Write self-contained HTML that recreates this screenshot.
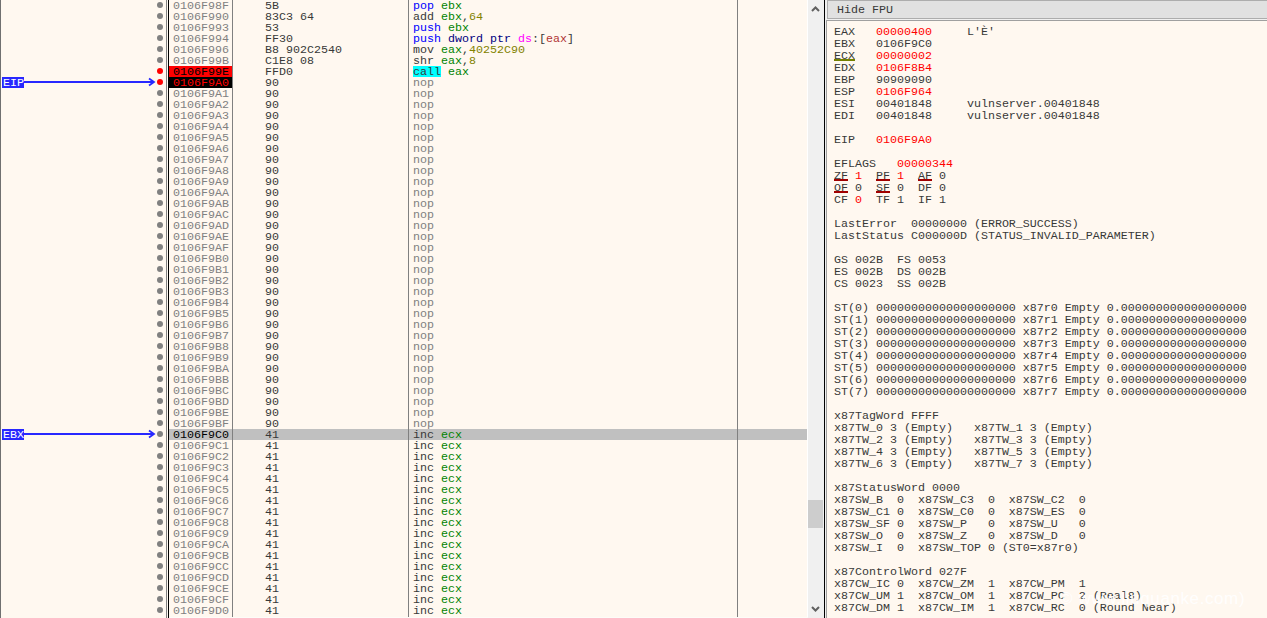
<!DOCTYPE html>
<html><head><meta charset="utf-8"><style>
html,body{margin:0;padding:0}
body{width:1267px;height:618px;overflow:hidden;position:relative;background:#FFF8F0;font-family:"Liberation Mono",monospace;font-size:11.67px;color:#383838}
.a{position:absolute}
.t{position:absolute;white-space:pre;line-height:11px;height:11px}
.ad{color:#808080}
.pp{color:#0000FF}
.rg{color:#008300}
.vl{color:#828200}
.ms{color:#000080}
.sg{color:#FF00FF}
.mr{color:#B03434}
.cl{}
.np{color:#808080}
.dot{position:absolute;width:6px;height:6px;border-radius:50%;background:#808080;left:156.5px}
.rd{background:#FF0000}
.rt{position:absolute;white-space:pre;line-height:12px;height:12px;left:834px}
.red{color:#FF0000}
</style></head><body>

<div class="a" style="left:0;top:0;width:1px;height:618px;background:#707070"></div>
<div class="a" style="left:166px;top:0;width:1px;height:618px;background:#808080"></div>
<div class="a" style="left:168px;top:0;width:1px;height:618px;background:#000"></div>
<div class="a" style="left:169px;top:429px;width:638px;height:11px;background:#C0C0C0"></div>
<div class="a" style="left:169px;top:66px;width:63px;height:11px;background:#FF0000"></div>
<div class="a" style="left:169px;top:77px;width:63px;height:11px;background:#000000"></div>
<div class="a" style="left:413px;top:66px;width:28px;height:11px;background:#00FFFF"></div>
<div class="a" style="left:232px;top:0;width:1px;height:617px;background:#808080"></div>
<div class="a" style="left:408px;top:0;width:1px;height:617px;background:#808080"></div>
<div class="a" style="left:737px;top:0;width:1px;height:617px;background:#808080"></div>
<div class="dot" style="top:2.3px"></div>
<div class="t" style="left:173px;top:1px;color:#808080">0106F98F</div>
<div class="t" style="left:265px;top:1px">5B</div>
<div class="t" style="left:413px;top:1px"><span class="pp">pop</span> <span class="rg">ebx</span></div>
<div class="dot" style="top:13.3px"></div>
<div class="t" style="left:173px;top:12px;color:#808080">0106F990</div>
<div class="t" style="left:265px;top:12px">83C3 64</div>
<div class="t" style="left:413px;top:12px">add <span class="rg">ebx</span>,<span class="vl">64</span></div>
<div class="dot" style="top:24.3px"></div>
<div class="t" style="left:173px;top:23px;color:#808080">0106F993</div>
<div class="t" style="left:265px;top:23px">53</div>
<div class="t" style="left:413px;top:23px"><span class="pp">push</span> <span class="rg">ebx</span></div>
<div class="dot" style="top:35.3px"></div>
<div class="t" style="left:173px;top:34px;color:#808080">0106F994</div>
<div class="t" style="left:265px;top:34px">FF30</div>
<div class="t" style="left:413px;top:34px"><span class="pp">push</span> <span class="ms">dword ptr</span> <span class="sg">ds</span>:[<span class="mr">eax</span>]</div>
<div class="dot" style="top:46.3px"></div>
<div class="t" style="left:173px;top:45px;color:#808080">0106F996</div>
<div class="t" style="left:265px;top:45px">B8 902C2540</div>
<div class="t" style="left:413px;top:45px">mov <span class="rg">eax</span>,<span class="vl">40252C90</span></div>
<div class="dot" style="top:57.3px"></div>
<div class="t" style="left:173px;top:56px;color:#808080">0106F99B</div>
<div class="t" style="left:265px;top:56px">C1E8 08</div>
<div class="t" style="left:413px;top:56px">shr <span class="rg">eax</span>,<span class="vl">8</span></div>
<div class="dot rd" style="top:68.3px"></div>
<div class="t" style="left:173px;top:67px;color:#000">0106F99E</div>
<div class="t" style="left:265px;top:67px">FFD0</div>
<div class="t" style="left:413px;top:67px"><span class="cl">call</span> <span class="rg">eax</span></div>
<div class="dot rd" style="top:79.3px"></div>
<div class="t" style="left:173px;top:78px;color:#FF0000">0106F9A0</div>
<div class="t" style="left:265px;top:78px">90</div>
<div class="t" style="left:413px;top:78px"><span class="np">nop</span></div>
<div class="dot" style="top:90.3px"></div>
<div class="t" style="left:173px;top:89px;color:#808080">0106F9A1</div>
<div class="t" style="left:265px;top:89px">90</div>
<div class="t" style="left:413px;top:89px"><span class="np">nop</span></div>
<div class="dot" style="top:101.3px"></div>
<div class="t" style="left:173px;top:100px;color:#808080">0106F9A2</div>
<div class="t" style="left:265px;top:100px">90</div>
<div class="t" style="left:413px;top:100px"><span class="np">nop</span></div>
<div class="dot" style="top:112.3px"></div>
<div class="t" style="left:173px;top:111px;color:#808080">0106F9A3</div>
<div class="t" style="left:265px;top:111px">90</div>
<div class="t" style="left:413px;top:111px"><span class="np">nop</span></div>
<div class="dot" style="top:123.3px"></div>
<div class="t" style="left:173px;top:122px;color:#808080">0106F9A4</div>
<div class="t" style="left:265px;top:122px">90</div>
<div class="t" style="left:413px;top:122px"><span class="np">nop</span></div>
<div class="dot" style="top:134.3px"></div>
<div class="t" style="left:173px;top:133px;color:#808080">0106F9A5</div>
<div class="t" style="left:265px;top:133px">90</div>
<div class="t" style="left:413px;top:133px"><span class="np">nop</span></div>
<div class="dot" style="top:145.3px"></div>
<div class="t" style="left:173px;top:144px;color:#808080">0106F9A6</div>
<div class="t" style="left:265px;top:144px">90</div>
<div class="t" style="left:413px;top:144px"><span class="np">nop</span></div>
<div class="dot" style="top:156.3px"></div>
<div class="t" style="left:173px;top:155px;color:#808080">0106F9A7</div>
<div class="t" style="left:265px;top:155px">90</div>
<div class="t" style="left:413px;top:155px"><span class="np">nop</span></div>
<div class="dot" style="top:167.3px"></div>
<div class="t" style="left:173px;top:166px;color:#808080">0106F9A8</div>
<div class="t" style="left:265px;top:166px">90</div>
<div class="t" style="left:413px;top:166px"><span class="np">nop</span></div>
<div class="dot" style="top:178.3px"></div>
<div class="t" style="left:173px;top:177px;color:#808080">0106F9A9</div>
<div class="t" style="left:265px;top:177px">90</div>
<div class="t" style="left:413px;top:177px"><span class="np">nop</span></div>
<div class="dot" style="top:189.3px"></div>
<div class="t" style="left:173px;top:188px;color:#808080">0106F9AA</div>
<div class="t" style="left:265px;top:188px">90</div>
<div class="t" style="left:413px;top:188px"><span class="np">nop</span></div>
<div class="dot" style="top:200.3px"></div>
<div class="t" style="left:173px;top:199px;color:#808080">0106F9AB</div>
<div class="t" style="left:265px;top:199px">90</div>
<div class="t" style="left:413px;top:199px"><span class="np">nop</span></div>
<div class="dot" style="top:211.3px"></div>
<div class="t" style="left:173px;top:210px;color:#808080">0106F9AC</div>
<div class="t" style="left:265px;top:210px">90</div>
<div class="t" style="left:413px;top:210px"><span class="np">nop</span></div>
<div class="dot" style="top:222.3px"></div>
<div class="t" style="left:173px;top:221px;color:#808080">0106F9AD</div>
<div class="t" style="left:265px;top:221px">90</div>
<div class="t" style="left:413px;top:221px"><span class="np">nop</span></div>
<div class="dot" style="top:233.3px"></div>
<div class="t" style="left:173px;top:232px;color:#808080">0106F9AE</div>
<div class="t" style="left:265px;top:232px">90</div>
<div class="t" style="left:413px;top:232px"><span class="np">nop</span></div>
<div class="dot" style="top:244.3px"></div>
<div class="t" style="left:173px;top:243px;color:#808080">0106F9AF</div>
<div class="t" style="left:265px;top:243px">90</div>
<div class="t" style="left:413px;top:243px"><span class="np">nop</span></div>
<div class="dot" style="top:255.3px"></div>
<div class="t" style="left:173px;top:254px;color:#808080">0106F9B0</div>
<div class="t" style="left:265px;top:254px">90</div>
<div class="t" style="left:413px;top:254px"><span class="np">nop</span></div>
<div class="dot" style="top:266.3px"></div>
<div class="t" style="left:173px;top:265px;color:#808080">0106F9B1</div>
<div class="t" style="left:265px;top:265px">90</div>
<div class="t" style="left:413px;top:265px"><span class="np">nop</span></div>
<div class="dot" style="top:277.3px"></div>
<div class="t" style="left:173px;top:276px;color:#808080">0106F9B2</div>
<div class="t" style="left:265px;top:276px">90</div>
<div class="t" style="left:413px;top:276px"><span class="np">nop</span></div>
<div class="dot" style="top:288.3px"></div>
<div class="t" style="left:173px;top:287px;color:#808080">0106F9B3</div>
<div class="t" style="left:265px;top:287px">90</div>
<div class="t" style="left:413px;top:287px"><span class="np">nop</span></div>
<div class="dot" style="top:299.3px"></div>
<div class="t" style="left:173px;top:298px;color:#808080">0106F9B4</div>
<div class="t" style="left:265px;top:298px">90</div>
<div class="t" style="left:413px;top:298px"><span class="np">nop</span></div>
<div class="dot" style="top:310.3px"></div>
<div class="t" style="left:173px;top:309px;color:#808080">0106F9B5</div>
<div class="t" style="left:265px;top:309px">90</div>
<div class="t" style="left:413px;top:309px"><span class="np">nop</span></div>
<div class="dot" style="top:321.3px"></div>
<div class="t" style="left:173px;top:320px;color:#808080">0106F9B6</div>
<div class="t" style="left:265px;top:320px">90</div>
<div class="t" style="left:413px;top:320px"><span class="np">nop</span></div>
<div class="dot" style="top:332.3px"></div>
<div class="t" style="left:173px;top:331px;color:#808080">0106F9B7</div>
<div class="t" style="left:265px;top:331px">90</div>
<div class="t" style="left:413px;top:331px"><span class="np">nop</span></div>
<div class="dot" style="top:343.3px"></div>
<div class="t" style="left:173px;top:342px;color:#808080">0106F9B8</div>
<div class="t" style="left:265px;top:342px">90</div>
<div class="t" style="left:413px;top:342px"><span class="np">nop</span></div>
<div class="dot" style="top:354.3px"></div>
<div class="t" style="left:173px;top:353px;color:#808080">0106F9B9</div>
<div class="t" style="left:265px;top:353px">90</div>
<div class="t" style="left:413px;top:353px"><span class="np">nop</span></div>
<div class="dot" style="top:365.3px"></div>
<div class="t" style="left:173px;top:364px;color:#808080">0106F9BA</div>
<div class="t" style="left:265px;top:364px">90</div>
<div class="t" style="left:413px;top:364px"><span class="np">nop</span></div>
<div class="dot" style="top:376.3px"></div>
<div class="t" style="left:173px;top:375px;color:#808080">0106F9BB</div>
<div class="t" style="left:265px;top:375px">90</div>
<div class="t" style="left:413px;top:375px"><span class="np">nop</span></div>
<div class="dot" style="top:387.3px"></div>
<div class="t" style="left:173px;top:386px;color:#808080">0106F9BC</div>
<div class="t" style="left:265px;top:386px">90</div>
<div class="t" style="left:413px;top:386px"><span class="np">nop</span></div>
<div class="dot" style="top:398.3px"></div>
<div class="t" style="left:173px;top:397px;color:#808080">0106F9BD</div>
<div class="t" style="left:265px;top:397px">90</div>
<div class="t" style="left:413px;top:397px"><span class="np">nop</span></div>
<div class="dot" style="top:409.3px"></div>
<div class="t" style="left:173px;top:408px;color:#808080">0106F9BE</div>
<div class="t" style="left:265px;top:408px">90</div>
<div class="t" style="left:413px;top:408px"><span class="np">nop</span></div>
<div class="dot" style="top:420.3px"></div>
<div class="t" style="left:173px;top:419px;color:#808080">0106F9BF</div>
<div class="t" style="left:265px;top:419px">90</div>
<div class="t" style="left:413px;top:419px"><span class="np">nop</span></div>
<div class="dot" style="top:431.3px"></div>
<div class="t" style="left:173px;top:430px;color:#000">0106F9C0</div>
<div class="t" style="left:265px;top:430px">41</div>
<div class="t" style="left:413px;top:430px">inc <span class="rg">ecx</span></div>
<div class="dot" style="top:442.3px"></div>
<div class="t" style="left:173px;top:441px;color:#808080">0106F9C1</div>
<div class="t" style="left:265px;top:441px">41</div>
<div class="t" style="left:413px;top:441px">inc <span class="rg">ecx</span></div>
<div class="dot" style="top:453.3px"></div>
<div class="t" style="left:173px;top:452px;color:#808080">0106F9C2</div>
<div class="t" style="left:265px;top:452px">41</div>
<div class="t" style="left:413px;top:452px">inc <span class="rg">ecx</span></div>
<div class="dot" style="top:464.3px"></div>
<div class="t" style="left:173px;top:463px;color:#808080">0106F9C3</div>
<div class="t" style="left:265px;top:463px">41</div>
<div class="t" style="left:413px;top:463px">inc <span class="rg">ecx</span></div>
<div class="dot" style="top:475.3px"></div>
<div class="t" style="left:173px;top:474px;color:#808080">0106F9C4</div>
<div class="t" style="left:265px;top:474px">41</div>
<div class="t" style="left:413px;top:474px">inc <span class="rg">ecx</span></div>
<div class="dot" style="top:486.3px"></div>
<div class="t" style="left:173px;top:485px;color:#808080">0106F9C5</div>
<div class="t" style="left:265px;top:485px">41</div>
<div class="t" style="left:413px;top:485px">inc <span class="rg">ecx</span></div>
<div class="dot" style="top:497.3px"></div>
<div class="t" style="left:173px;top:496px;color:#808080">0106F9C6</div>
<div class="t" style="left:265px;top:496px">41</div>
<div class="t" style="left:413px;top:496px">inc <span class="rg">ecx</span></div>
<div class="dot" style="top:508.3px"></div>
<div class="t" style="left:173px;top:507px;color:#808080">0106F9C7</div>
<div class="t" style="left:265px;top:507px">41</div>
<div class="t" style="left:413px;top:507px">inc <span class="rg">ecx</span></div>
<div class="dot" style="top:519.3px"></div>
<div class="t" style="left:173px;top:518px;color:#808080">0106F9C8</div>
<div class="t" style="left:265px;top:518px">41</div>
<div class="t" style="left:413px;top:518px">inc <span class="rg">ecx</span></div>
<div class="dot" style="top:530.3px"></div>
<div class="t" style="left:173px;top:529px;color:#808080">0106F9C9</div>
<div class="t" style="left:265px;top:529px">41</div>
<div class="t" style="left:413px;top:529px">inc <span class="rg">ecx</span></div>
<div class="dot" style="top:541.3px"></div>
<div class="t" style="left:173px;top:540px;color:#808080">0106F9CA</div>
<div class="t" style="left:265px;top:540px">41</div>
<div class="t" style="left:413px;top:540px">inc <span class="rg">ecx</span></div>
<div class="dot" style="top:552.3px"></div>
<div class="t" style="left:173px;top:551px;color:#808080">0106F9CB</div>
<div class="t" style="left:265px;top:551px">41</div>
<div class="t" style="left:413px;top:551px">inc <span class="rg">ecx</span></div>
<div class="dot" style="top:563.3px"></div>
<div class="t" style="left:173px;top:562px;color:#808080">0106F9CC</div>
<div class="t" style="left:265px;top:562px">41</div>
<div class="t" style="left:413px;top:562px">inc <span class="rg">ecx</span></div>
<div class="dot" style="top:574.3px"></div>
<div class="t" style="left:173px;top:573px;color:#808080">0106F9CD</div>
<div class="t" style="left:265px;top:573px">41</div>
<div class="t" style="left:413px;top:573px">inc <span class="rg">ecx</span></div>
<div class="dot" style="top:585.3px"></div>
<div class="t" style="left:173px;top:584px;color:#808080">0106F9CE</div>
<div class="t" style="left:265px;top:584px">41</div>
<div class="t" style="left:413px;top:584px">inc <span class="rg">ecx</span></div>
<div class="dot" style="top:596.3px"></div>
<div class="t" style="left:173px;top:595px;color:#808080">0106F9CF</div>
<div class="t" style="left:265px;top:595px">41</div>
<div class="t" style="left:413px;top:595px">inc <span class="rg">ecx</span></div>
<div class="dot" style="top:607.3px"></div>
<div class="t" style="left:173px;top:606px;color:#808080">0106F9D0</div>
<div class="t" style="left:265px;top:606px">41</div>
<div class="t" style="left:413px;top:606px">inc <span class="rg">ecx</span></div>
<div class="a" style="left:2px;top:77px;width:22px;height:11px;background:#2828FF"></div><div class="t" style="left:3px;top:78px;color:#fff">EIP</div><div class="a" style="left:24px;top:81px;width:130px;height:2px;background:#2828FF"></div><svg class="a" style="left:146px;top:77px" width="12" height="12"><polyline points="3,1.4 8,5 3,8.6" fill="none" stroke="#2828FF" stroke-width="1.8"/></svg>
<div class="a" style="left:2px;top:429px;width:22px;height:11px;background:#2828FF"></div><div class="t" style="left:3px;top:430px;color:#fff">EBX</div><div class="a" style="left:24px;top:433px;width:130px;height:2px;background:#2828FF"></div><svg class="a" style="left:146px;top:429px" width="12" height="12"><polyline points="3,1.4 8,5 3,8.6" fill="none" stroke="#2828FF" stroke-width="1.8"/></svg>
<div class="a" style="left:807px;top:0;width:1px;height:618px;background:#FFFFFF"></div>
<div class="a" style="left:169px;top:617px;width:639px;height:1px;background:#FDFCF8"></div>
<div class="a" style="left:808px;top:0;width:16px;height:618px;background:#F0F0F0"></div>
<div class="a" style="left:808px;top:500px;width:15px;height:28px;background:#CDCDCD"></div>
<svg class="a" style="left:808px;top:0" width="16" height="20"><polyline points="4,11 7.5,7.5 11,11" fill="none" stroke="#606060" stroke-width="2"/></svg>
<svg class="a" style="left:808px;top:598px" width="16" height="20"><polyline points="4,9 7.5,12.5 11,9" fill="none" stroke="#606060" stroke-width="2"/></svg>
<div class="a" style="left:824px;top:0;width:1px;height:618px;background:#000"></div>
<div class="a" style="left:825px;top:0;width:1px;height:618px;background:#F0F0F0"></div>
<div class="a" style="left:826px;top:0;width:441px;height:618px;background:#F0F0F0"></div>
<div class="a" style="left:827px;top:0;width:440px;height:19px;box-sizing:border-box;border:1px solid #ADADAD;border-right:none;background:#E1E1E1"></div>
<div class="t" style="left:837px;top:5px;">Hide FPU</div>
<div class="a" style="left:826px;top:20px;width:441px;height:598px;box-sizing:border-box;border-left:1px solid #A0A0A0;border-top:1px solid #A0A0A0;background:#FFF8F0"></div>
<div class="rt" style="top:26px">EAX   <span class="red">00000400</span>     L'È'</div>
<div class="rt" style="top:38px">EBX   0106F9C0</div>
<div class="rt" style="top:50px">ECX   <span class="red">00000002</span></div>
<div class="rt" style="top:62px">EDX   <span class="red">0106F8B4</span></div>
<div class="rt" style="top:74px">EBP   90909090</div>
<div class="rt" style="top:86px">ESP   <span class="red">0106F964</span></div>
<div class="rt" style="top:98px">ESI   00401848     vulnserver.00401848</div>
<div class="rt" style="top:110px">EDI   00401848     vulnserver.00401848</div>
<div class="rt" style="top:134px">EIP   <span class="red">0106F9A0</span></div>
<div class="rt" style="top:158px">EFLAGS   <span class="red">00000344</span></div>
<div class="rt" style="top:170px">ZF <span class="red">1</span>  PF <span class="red">1</span>  AF 0</div>
<div class="rt" style="top:182px">OF 0  SF 0  DF 0</div>
<div class="rt" style="top:194px">CF <span class="red">0</span>  TF 1  IF 1</div>
<div class="rt" style="top:218px">LastError  00000000 (ERROR_SUCCESS)</div>
<div class="rt" style="top:230px">LastStatus C000000D (STATUS_INVALID_PARAMETER)</div>
<div class="rt" style="top:254px">GS 002B  FS 0053</div>
<div class="rt" style="top:266px">ES 002B  DS 002B</div>
<div class="rt" style="top:278px">CS 0023  SS 002B</div>
<div class="rt" style="top:302px">ST(0) 00000000000000000000 x87r0 Empty 0.000000000000000000</div>
<div class="rt" style="top:314px">ST(1) 00000000000000000000 x87r1 Empty 0.000000000000000000</div>
<div class="rt" style="top:326px">ST(2) 00000000000000000000 x87r2 Empty 0.000000000000000000</div>
<div class="rt" style="top:338px">ST(3) 00000000000000000000 x87r3 Empty 0.000000000000000000</div>
<div class="rt" style="top:350px">ST(4) 00000000000000000000 x87r4 Empty 0.000000000000000000</div>
<div class="rt" style="top:362px">ST(5) 00000000000000000000 x87r5 Empty 0.000000000000000000</div>
<div class="rt" style="top:374px">ST(6) 00000000000000000000 x87r6 Empty 0.000000000000000000</div>
<div class="rt" style="top:386px">ST(7) 00000000000000000000 x87r7 Empty 0.000000000000000000</div>
<div class="rt" style="top:410px">x87TagWord FFFF</div>
<div class="rt" style="top:422px">x87TW_0 3 (Empty)   x87TW_1 3 (Empty)</div>
<div class="rt" style="top:434px">x87TW_2 3 (Empty)   x87TW_3 3 (Empty)</div>
<div class="rt" style="top:446px">x87TW_4 3 (Empty)   x87TW_5 3 (Empty)</div>
<div class="rt" style="top:458px">x87TW_6 3 (Empty)   x87TW_7 3 (Empty)</div>
<div class="rt" style="top:482px">x87StatusWord 0000</div>
<div class="rt" style="top:494px">x87SW_B  0  x87SW_C3  0  x87SW_C2  0</div>
<div class="rt" style="top:506px">x87SW_C1 0  x87SW_C0  0  x87SW_ES  0</div>
<div class="rt" style="top:518px">x87SW_SF 0  x87SW_P   0  x87SW_U   0</div>
<div class="rt" style="top:530px">x87SW_O  0  x87SW_Z   0  x87SW_D   0</div>
<div class="rt" style="top:542px">x87SW_I  0  x87SW_TOP 0 (ST0=x87r0)</div>
<div class="rt" style="top:566px">x87ControlWord 027F</div>
<div class="rt" style="top:578px">x87CW_IC 0  x87CW_ZM  1  x87CW_PM  1</div>
<div class="rt" style="top:590px">x87CW_UM 1  x87CW_OM  1  x87CW_PC  2 (Real8)</div>
<div class="rt" style="top:602px">x87CW_DM 1  x87CW_IM  1  x87CW_RC  0 (Round Near)</div>
<div class="a" style="left:834px;top:59px;width:21px;height:2px;background:#748000"></div>
<div class="a" style="left:834px;top:179px;width:14px;height:2px;background:#A00000"></div>
<div class="a" style="left:876px;top:179px;width:14px;height:2px;background:#A00000"></div>
<div class="a" style="left:918px;top:179px;width:14px;height:2px;background:#A00000"></div>
<div class="a" style="left:834px;top:191px;width:14px;height:2px;background:#A00000"></div>
<div class="a" style="left:876px;top:191px;width:14px;height:2px;background:#A00000"></div>
<div class="a" style="left:1060px;top:589px;letter-spacing:0.6px;font:17px 'Liberation Sans',sans-serif;color:rgba(255,255,255,0.93);white-space:pre" id="wm">© www.liuquanke.com)</div>
</body></html>
